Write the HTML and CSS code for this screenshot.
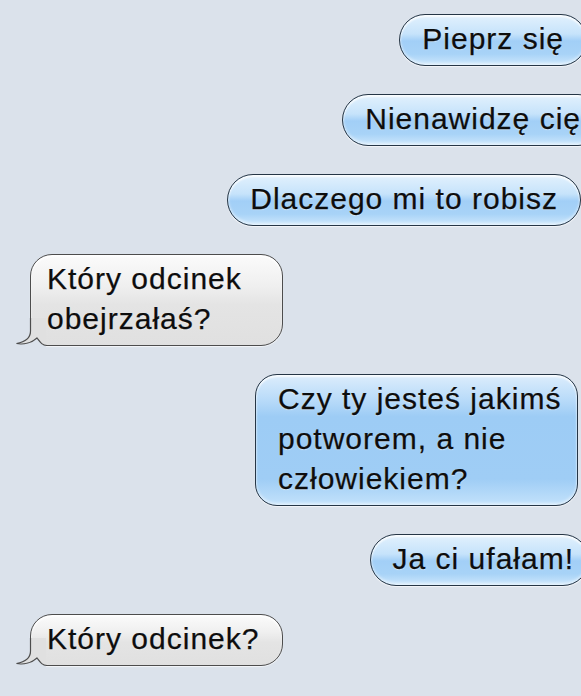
FILE: index.html
```html
<!DOCTYPE html>
<html lang="pl">
<head>
  <meta charset="UTF-8">
  <title>Wiadomości</title>
  <meta name="viewport" content="width=device-width, initial-scale=1">
  <link rel="stylesheet" href="styles.css">
</head>
<body>
<div class="chat">

  <div class="row out">
    <div class="bubble sent shift-6">Pieprz się</div>
  </div>

  <div class="row out">
    <div class="bubble sent shift-23">Nienawidzę cię</div>
  </div>

  <div class="row out">
    <div class="bubble sent">Dlaczego mi to robisz</div>
  </div>

  <div class="row in">
    <div class="bubble received">
      <span class="text">Który odcinek obejrzałaś?</span>
      <svg class="tail" width="40" height="30" viewBox="0 0 40 30">
        <path d="M14.5,0 L14.5,13 C14.5,20 9,24 0.5,25.5 C8,27 16,24.5 21,20 C24,24 26,27.5 30,27.5 L30,0 Z" fill="#e0e0e0"/>
        <path d="M0.5,25.5 C8,27 16,24.5 21,20 C24,24 26,27.5 30,27.5 L30,30 L0,30 L0,25.5 Z" fill="#dbe2eb"/>
        <path d="M14.5,0 L14.5,13 C14.5,20 9,24 0.5,25.5 C8,27 16,24.5 21,20 C24,24 26,27.5 31,27.5" fill="none" stroke="#4d4d4d" stroke-width="1.2"/>
      </svg>
    </div>
  </div>

  <div class="row out">
    <div class="bubble sent wide">Czy ty jesteś jakimś potworem, a nie człowiekiem?</div>
  </div>

  <div class="row out">
    <div class="bubble sent shift-8">Ja ci ufałam!</div>
  </div>

  <div class="row in">
    <div class="bubble received">
      <span class="text">Który odcinek?</span>
      <svg class="tail" width="40" height="30" viewBox="0 0 40 30">
        <path d="M14.5,0 L14.5,13 C14.5,20 9,24 0.5,25.5 C8,27 16,24.5 21,20 C24,24 26,27.5 30,27.5 L30,0 Z" fill="#e0e0e0"/>
        <path d="M0.5,25.5 C8,27 16,24.5 21,20 C24,24 26,27.5 30,27.5 L30,30 L0,30 L0,25.5 Z" fill="#dbe2eb"/>
        <path d="M14.5,0 L14.5,13 C14.5,20 9,24 0.5,25.5 C8,27 16,24.5 21,20 C24,24 26,27.5 31,27.5" fill="none" stroke="#4d4d4d" stroke-width="1.2"/>
      </svg>
    </div>
  </div>

</div>
</body>
</html>
```

FILE: styles.css
```css
* {
  box-sizing: border-box;
}

body {
  margin: 0;
  padding: 0;
  background-color: #dbe2eb;
  font-family: 'Liberation Sans', Arial, sans-serif;
  color: #0d0d0d;
  overflow: hidden;
}

.chat {
  display: flex;
  flex-direction: column;
  gap: 28px;
  padding: 14px 0 30px 30px;
}

.row {
  display: flex;
}

.row.out {
  justify-content: flex-end;
}

.row.in {
  justify-content: flex-start;
}

.bubble {
  position: relative;
  font-size: 30px;
  letter-spacing: 1px;
  line-height: 40px;
  padding: 4px 22px 6px;
  border: 1px solid #263646;
  -webkit-text-stroke: 0.25px #0d0d0d;
  text-shadow: 0 1px 1px rgba(255, 255, 255, 0.5);
  white-space: nowrap;
}

/* blue pills on the right */
.bubble.sent {
  border-radius: 26px;
  background: linear-gradient(to bottom, #e2f1fd 0%, #c6e3fb 38%, #a2cff7 52%, #a8d3f7 78%, #cde7fc 100%);
  box-shadow: inset 0 2px 2px rgba(255, 255, 255, 0.85), inset 0 -2px 3px rgba(255, 255, 255, 0.5), 0 1px 1px rgba(255, 255, 255, 0.7);
}

.bubble.sent.shift-6 {
  margin-right: -6px;
}

.bubble.sent.shift-8 {
  margin-right: -8px;
  padding-right: 14px;
}

.bubble.sent.shift-23 {
  margin-right: -23px;
}

.bubble.sent.wide {
  white-space: normal;
  width: 323px;
  margin-right: 3px;
  padding-right: 12px;
  border-radius: 22px;
  background: linear-gradient(to bottom, #dcedfc 0%, #b7daf9 20%, #9dccf5 32%, #9fcdf5 80%, #c3e2fb 100%);
}

/* grey bubbles on the left */
.bubble.received {
  width: 253px;
  white-space: normal;
  padding-left: 16px;
  padding-right: 18px;
  border-color: #4d4d4d;
  border-radius: 22px 22px 22px 4px;
  background: linear-gradient(to bottom, #fbfbfb 0%, #efefef 35%, #e4e4e4 55%, #e0e0e0 100%);
  box-shadow: inset 0 2px 2px rgba(255, 255, 255, 0.9), 0 1px 1px rgba(255, 255, 255, 0.7);
}

.bubble .text {
  position: relative;
  z-index: 1;
}

.tail {
  position: absolute;
  left: -15px;
  bottom: -3px;
  display: block;
}
```
